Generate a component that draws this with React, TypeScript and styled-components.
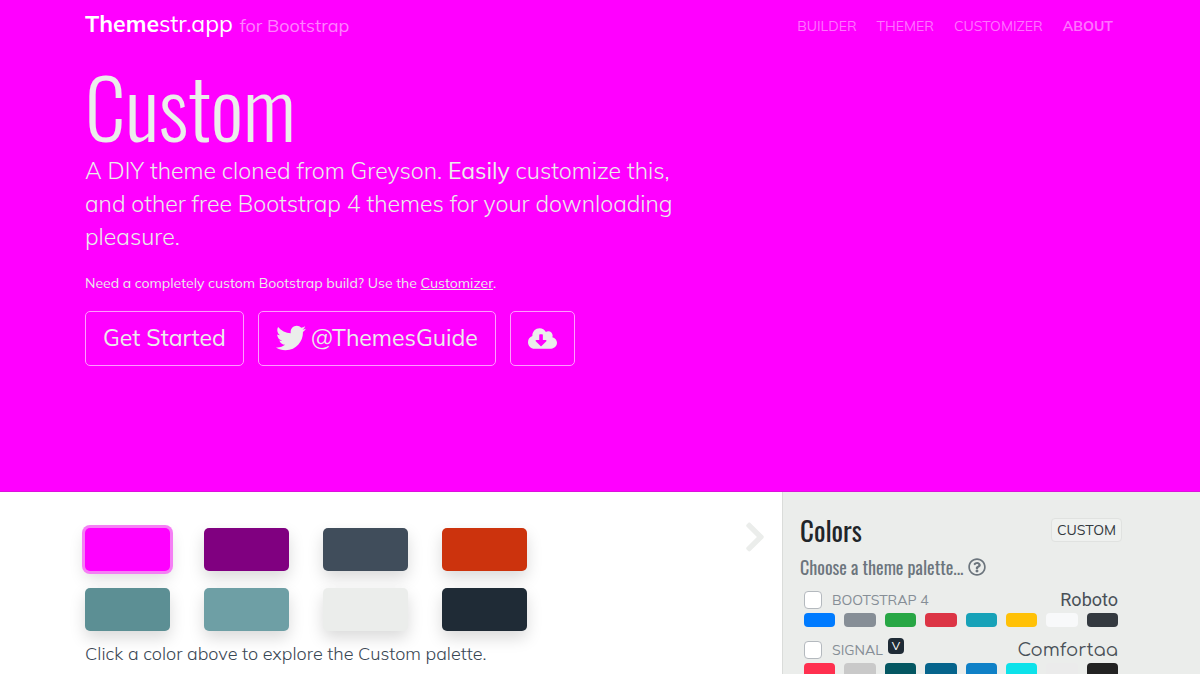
import React from "react";
import styled, { createGlobalStyle } from "styled-components";
import { FaTwitter, FaCloudDownloadAlt, FaChevronRight, FaRegQuestionCircle } from "react-icons/fa";

const GlobalStyle = createGlobalStyle`
  *, *::before, *::after { box-sizing: border-box; }
  body {
    margin: 0;
    background: #fff;
    color: #212529;
    font-family: Muli, Mulish, Lato, sans-serif;
    font-size: 16px;
    line-height: 24px;
  }
  h1, h2, h3, p, ul { margin: 0; padding: 0; }
`;

const narrow = `Oswald, "Roboto Condensed", Roboto, sans-serif`;

const Page = styled.div`
  display: flex;
  flex-direction: column;
  height: 100vh;
  overflow: hidden;
`;

const Hero = styled.header`
  flex: none;
  background: #ff00ff;
  border-bottom: 1px solid #dd11dd;
  padding: 0 85px 125px;
  color: #ebedeb;
`;

const Navbar = styled.nav`
  display: flex;
  align-items: center;
  justify-content: space-between;
  height: 50px;
`;

const Brand = styled.a`
  display: flex;
  align-items: baseline;
  gap: 7px;
  color: #fff;
  font-size: 23px;
  text-decoration: none;
  b { font-weight: 700; }
  small { font-size: 18px; color: #ff80ff; }
`;

const NavLinks = styled.ul`
  display: flex;
  gap: 20px;
  padding-right: 2px;
  list-style: none;
`;

const NavLink = styled.a<{ $strong?: boolean }>`
  color: #ff73ff;
  font-size: 14px;
  font-weight: ${(p) => (p.$strong ? 700 : 400)};
  text-decoration: none;
  text-transform: uppercase;
`;

const Title = styled.h1`
  margin: 14px 0 8px;
  font-family: ${narrow};
  font-size: 81px;
  font-weight: 300;
  line-height: 82px;
`;

const Lead = styled.p`
  max-width: 600px;
  font-size: 23px;
  font-weight: 300;
  line-height: 33px;
  b { font-weight: 400; }
`;

const Note = styled.p`
  margin-top: 18px;
  font-size: 14px;
  a { color: inherit; }
`;

const Actions = styled.div`
  display: flex;
  gap: 14px;
  margin-top: 16px;
`;

const OutlineButton = styled.button`
  display: flex;
  align-items: center;
  justify-content: center;
  gap: 5px;
  height: 55px;
  padding: 0 17px 1px;
  border: 1px solid #ff9cff;
  border-radius: 5px;
  background: transparent;
  color: #ebedeb;
  font: inherit;
  font-size: 23px;
`;

const Content = styled.div`
  display: flex;
  flex: 1;
  align-items: stretch;
  min-height: 0;
`;

const Main = styled.main`
  display: flex;
  flex: 1;
  align-items: flex-start;
  justify-content: space-between;
  padding: 28px 10px 0 85px;
  color: #3a4754;
`;

const Palette = styled.section`
  padding-top: 8px;
`;

const ColorGrid = styled.div`
  display: grid;
  grid-template-columns: repeat(4, 85px);
  gap: 17px 34px;
`;

const ColorButton = styled.button<{ $color: string; $active?: boolean }>`
  height: 43px;
  padding: 0;
  border: 0;
  border-radius: 5px;
  background: ${(p) => p.$color};
  box-shadow: ${(p) => (p.$active ? "0 0 0 3px #f57ef5, " : "")}0 7px 16px rgba(0, 0, 0, 0.15);
`;

const Hint = styled.p`
  margin-top: 11px;
  font-size: 18px;
  font-weight: 300;
`;

const Collapse = styled.button`
  display: flex;
  padding: 0;
  border: 0;
  background: none;
  color: #ebedeb;
`;

const Sidebar = styled.aside`
  flex: none;
  width: 418px;
  padding: 20px 82px 0 17px;
  overflow: hidden;
  background: #ebedeb;
  border-left: 1px solid #dadcda;
`;

const SidebarHead = styled.div`
  display: flex;
  align-items: center;
  justify-content: space-between;
  margin-right: -4px;
`;

const SidebarTitle = styled.h2`
  font-family: ${narrow};
  font-size: 27px;
  font-weight: 400;
  line-height: 36px;
`;

const CustomButton = styled.button`
  height: 24px;
  padding: 0 5px;
  border: 1px solid #e0e2e0;
  border-radius: 4px;
  background: #eff1ef;
  color: #343a40;
  font: inherit;
  font-size: 14px;
  line-height: 22px;
`;

const SidebarSub = styled.h3`
  display: flex;
  align-items: center;
  gap: 5px;
  margin-top: 9px;
  color: #6c757d;
  font-family: ${narrow};
  font-size: 18px;
  font-weight: 400;
  line-height: 20px;
`;

const Theme = styled.section`
  margin: 9px 0 0 4px;
`;

const ThemeHead = styled.div`
  display: flex;
  align-items: center;
  justify-content: space-between;
  height: 27px;
`;

const ThemeLabel = styled.label`
  display: flex;
  align-items: center;
  gap: 10px;
  color: #868e96;
  font-size: 14px;
  text-transform: uppercase;
`;

const Check = styled.input`
  appearance: none;
  width: 18px;
  height: 18px;
  margin: 0;
  border: 1px solid #b4b9be;
  border-radius: 4px;
  background: #fff;
`;

const ThemeName = styled.span`
  display: flex;
  gap: 5px;
`;

const Badge = styled.span`
  width: 16px;
  height: 16px;
  border-radius: 4px;
  background: #1f2b36;
  color: #fff;
  font-size: 12px;
  line-height: 16px;
  text-align: center;
`;

const FontName = styled.span<{ $font: string }>`
  color: #495057;
  font-family: ${(p) => p.$font};
  font-size: 18px;
`;

const Chips = styled.div`
  display: grid;
  grid-template-columns: repeat(8, 1fr);
  gap: 9px;
`;

const Chip = styled.span<{ $color: string }>`
  height: 14px;
  border-radius: 4px;
  background: ${(p) => p.$color};
`;

const palette = [
  { name: "Primary", color: "#ff00ff" },
  { name: "Secondary", color: "#800080" },
  { name: "Success", color: "#404d5b" },
  { name: "Danger", color: "#cc330d" },
  { name: "Info", color: "#5c8f94" },
  { name: "Warning", color: "#6e9fa5" },
  { name: "Light", color: "#ebedeb" },
  { name: "Dark", color: "#1f2b36" },
];

const themes = [
  {
    name: "Bootstrap 4",
    font: "Roboto",
    family: "Roboto, sans-serif",
    colors: ["#007bff", "#868e96", "#28a745", "#dc3545", "#17a2b8", "#ffc107", "#f8f9fa", "#343a40"],
  },
  {
    name: "Signal",
    badge: "V",
    font: "Comfortaa",
    family: "Comfortaa, Lato, sans-serif",
    colors: ["#ff304f", "#c9c9c9", "#045762", "#06648c", "#0f81c7", "#0de2ea", "#ebebeb", "#222222"],
  },
];

export default function App() {
  return (
    <Page>
      <GlobalStyle />
      <Hero>
        <Navbar>
          <Brand href="#">
            <span><b>Theme</b>str.app</span>
            <small>for Bootstrap</small>
          </Brand>
          <NavLinks>
            <li><NavLink href="#builder">Builder</NavLink></li>
            <li><NavLink href="#themer">Themer</NavLink></li>
            <li><NavLink href="#customizer">Customizer</NavLink></li>
            <li><NavLink href="#about" $strong>About</NavLink></li>
          </NavLinks>
        </Navbar>
        <Title>Custom</Title>
        <Lead>
          A DIY theme cloned from Greyson. <b>Easily</b> customize this, and other free
          Bootstrap 4 themes for your downloading pleasure.
        </Lead>
        <Note>
          Need a completely custom Bootstrap build? Use the <a href="#customizer">Customizer</a>.
        </Note>
        <Actions>
          <OutlineButton>Get Started</OutlineButton>
          <OutlineButton><FaTwitter size={30} />@ThemesGuide</OutlineButton>
          <OutlineButton aria-label="Download"><FaCloudDownloadAlt size={29} /></OutlineButton>
        </Actions>
      </Hero>
      <Content>
        <Main>
          <Palette>
            <ColorGrid>
              {palette.map((c, i) => (
                <ColorButton key={c.name} $color={c.color} $active={i === 0} aria-label={c.name} />
              ))}
            </ColorGrid>
            <Hint>Click a color above to explore the Custom palette.</Hint>
          </Palette>
          <Collapse aria-label="Collapse"><FaChevronRight size={34} /></Collapse>
        </Main>
        <Sidebar>
          <SidebarHead>
            <SidebarTitle>Colors</SidebarTitle>
            <CustomButton>CUSTOM</CustomButton>
          </SidebarHead>
          <SidebarSub>Choose a theme palette... <FaRegQuestionCircle size={18} /></SidebarSub>
          {themes.map((t) => (
            <Theme key={t.name}>
              <ThemeHead>
                <ThemeLabel>
                  <Check type="checkbox" />
                  <ThemeName>{t.name}{t.badge && <Badge>{t.badge}</Badge>}</ThemeName>
                </ThemeLabel>
                <FontName $font={t.family}>{t.font}</FontName>
              </ThemeHead>
              <Chips>
                {t.colors.map((c) => <Chip key={c} $color={c} />)}
              </Chips>
            </Theme>
          ))}
        </Sidebar>
      </Content>
    </Page>
  );
}
